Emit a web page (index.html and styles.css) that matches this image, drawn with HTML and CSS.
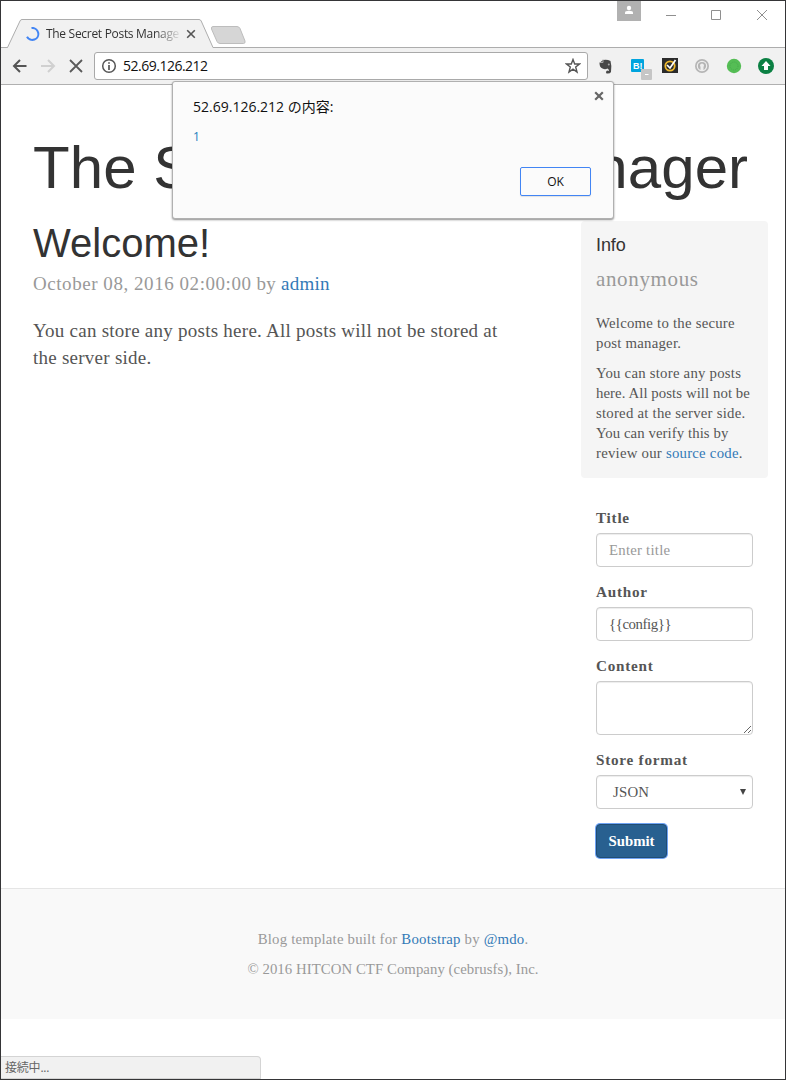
FILE: index.html
```
<!DOCTYPE html>
<html lang="en">
<head>
<meta charset="utf-8">
<title>The Secret Posts Manager</title>
<link rel="stylesheet" href="styles.css">
</head>
<body>
<div class="window">
  <header class="titlebar">
    <svg class="tab-shape" width="250" height="47" viewBox="0 0 250 47">
      <path d="M0 46.5H6.5L19 20Q19.6 18.500 21 18.500H198Q199.500 18.500 200.200 20L212 46.500H250V47H0Z" fill="#f1f1f1"/>
      <path d="M0 46.500H6.500L19 20Q19.600 18.500 21 18.500H198Q199.500 18.500 200.200 20L212 46.500H250" fill="none" stroke="#adadad"/>
      <path d="M212 25.500H236Q238 25.500 239 27.500L244 40Q244.500 42.500 242.500 42.500H219Q217 42.500 216 40.500L210.500 28Q210 25.500 212 25.500Z" fill="#d6d6d6" stroke="#bdbdbd"/>
    </svg>
    <div class="tab">
      <svg width="14" height="14" viewBox="0 0 14 14"><path d="M5.500 1A6 6 0 1 1 1 9.700" fill="none" stroke="#4285f4" stroke-width="2"/></svg>
      <span class="tab-title">The Secret Posts Manage</span>
      <svg width="10" height="10" viewBox="0 0 10 10"><path d="M1.200 1.200L8.800 8.800M8.800 1.200L1.200 8.800" stroke="#555" stroke-width="1.600"/></svg>
    </div>
    <div class="window-buttons">
      <span class="profile"><svg width="24" height="20" viewBox="0 0 24 20"><circle cx="12" cy="7" r="2.200" fill="#fff"/><path d="M8 13V11.500Q8 9.800 12 9.800T16 11.500V13Z" fill="#fff"/></svg></span>
      <svg width="112" height="28" viewBox="0 0 112 28"><path d="M0 14.500H10M45.500 9.500H54.500V18.500H45.500ZM91 9L101 19M101 9L91 19" fill="none" stroke="#8f8f8f"/></svg>
    </div>
  </header>
  <nav class="toolbar">
    <svg class="nav-icons" width="82" height="18" viewBox="0 0 82 18">
      <path d="M14.500 9H2M8 3L2 9L8 15" fill="none" stroke="#555" stroke-width="2"/>
      <path d="M29 9H42.500M36 3L42 9L36 15" fill="none" stroke="#d0d0d0" stroke-width="2"/>
      <path d="M58 3L70 15M70 3L58 15" stroke="#5a5a5a" stroke-width="1.800"/>
    </svg>
    <div class="address">
      <svg width="16" height="16" viewBox="0 0 16 16"><circle cx="8" cy="8" r="6.300" fill="none" stroke="#555" stroke-width="1.500"/><path d="M8 4.200V5.800M8 7V12" stroke="#555" stroke-width="1.700"/></svg>
      <span class="url">52.69.126.212</span>
      <svg width="16" height="16" viewBox="0 0 16 16"><path d="M8 1.500L9.700 6H14.500L10.700 9L12 14L8 11.100L4 14L5.300 9L1.500 6H6.300Z" fill="none" stroke="#555" stroke-width="1.400"/></svg>
    </div>
    <svg class="extensions" width="182" height="30" viewBox="0 0 182 30">
      <path d="M1.500 8L5 5Q9 4 12.500 6Q14 11 13 17Q12 19 8.500 18.500Q7 17 9 15.500L11 16Q11 14 9.500 13.500Q7 15 4.500 13.500Q1.500 12.500 1.500 8Z" fill="#484848"/><path d="M1.500 7.500H5V4.500" fill="none" stroke="#a9a9a9" stroke-width="1"/><circle cx="10.800" cy="9.500" r="1" fill="#aaa"/>
      <rect x="33" y="4" width="13" height="13" rx="1" fill="#00a4de"/><text x="35" y="14" class="hatena">B!</text><rect x="43" y="14" width="11" height="11" rx="1" fill="#c6c6c6"/><path d="M47 19.500H50.500" stroke="#fff"/>
      <rect x="64" y="3" width="16" height="15" fill="#2b2b2b"/><circle cx="72" cy="11" r="4.700" fill="none" stroke="#eeb82b" stroke-width="1.800"/><path d="M69 10L72 13L77.500 5" fill="none" stroke="#fff" stroke-width="1.700"/>
      <circle cx="104" cy="11" r="7" fill="#b5b5b5"/><circle cx="104" cy="11" r="4.700" fill="none" stroke="#eee" stroke-width="1.200"/><path d="M102.500 16V12Q101 9 104 8.500Q107 9 105.500 12V16Z" fill="#eee"/>
      <circle cx="136" cy="11" r="7.200" fill="#55bd55"/><circle cx="136" cy="11" r="4" fill="none" stroke="#45ac4b" stroke-dasharray="1 1"/>
      <circle cx="168" cy="11" r="8" fill="#0b8043"/><path d="M168 6L172.500 11H170V15H166V11H163.500Z" fill="#fff"/>
    </svg>
  </nav>

  <main class="page">
    <h1 class="blog-title">The Secret Posts Manager</h1>
    <div class="columns">
      <article class="post">
        <h2>Welcome!</h2>
        <p class="meta"><span class="date">October 08, 2016 02:00:00</span> by <a href="#">admin</a></p>
        <p class="body-text">You can store any posts here. All posts will not be stored at<br>the server side.</p>
      </article>
      <aside>
        <section class="info">
          <h4>Info</h4>
          <p class="user">anonymous</p>
          <p>Welcome to the secure<br>post manager.</p>
          <p>You can store any posts<br><span class="snug">here. All posts will not be</span><br>stored at the server side.<br><span class="snug">You can verify this by</span><br>review our <a href="#">source code</a>.</p>
        </section>
        <form class="post-form">
          <label for="title">Title</label>
          <input id="title" placeholder="Enter title">
          <label for="author">Author</label>
          <input id="author" class="author" value="{{config}}">
          <label for="content">Content</label>
          <div class="area"><textarea id="content"></textarea><svg class="grip" width="9" height="9" viewBox="0 0 9 9"><path d="M1 8L8 1M5 8L8 5" stroke="#555" stroke-width=".9"/></svg></div>
          <label>Store format</label>
          <div class="select"><span>JSON</span><svg width="6" height="6" viewBox="0 0 6 6"><path d="M0 0H6L3 6Z" fill="#444"/></svg></div>
          <button type="button">Submit</button>
        </form>
      </aside>
    </div>
  </main>
  <footer class="blog-footer">
    <p class="built">Blog template built for <a href="#">Bootstrap</a> by <a href="#">@mdo</a>.</p>
    <p class="copy">© 2016 HITCON CTF Company (cebrusfs), Inc.</p>
  </footer>

  <div class="dialog" role="dialog">
    <svg class="dialog-close" width="10" height="10" viewBox="0 0 10 10"><path d="M1.200 1.200L8.800 8.800M8.800 1.200L1.200 8.800" stroke="#666" stroke-width="2.200"/></svg>
    <p class="dialog-title">52.69.126.212 の内容:</p>
    <p class="dialog-text">1</p>
    <button class="ok" type="button">OK</button>
  </div>
  <div class="status">接続中...</div>
</div>
</body>
</html>
```
FILE: styles.css
```
* { box-sizing: border-box; }
body { margin: 0; }
.window {
  position: relative;
  width: 786px;
  height: 1080px;
  overflow: hidden;
  border: 1px solid #353537;
  background: #fff;
  color: #555;
  font-family: Georgia, "Liberation Serif", serif;
}
h1, h2, h4, p { margin: 0; }
h1, h2, h4 { font-family: "Liberation Sans", Arial, sans-serif; font-weight: 400; color: #333; }
a { color: #337ab7; text-decoration: none; }

.titlebar {
  position: relative;
  display: flex;
  justify-content: space-between;
  height: 47px;
  border-bottom: 1px solid #adadad;
}
.tab-shape { position: absolute; left: 0; top: 0; }
.tab { position: relative; display: flex; align-items: center; height: 29px; margin: 18px 0 0 25px; }
.tab-title {
  width: 134px;
  margin: 0 6px 0 6px;
  overflow: hidden;
  white-space: nowrap;
  font: 12px/18px "Open Sans", "Noto Sans", sans-serif;
  letter-spacing: -.3px;
  color: #333;
  -webkit-mask-image: linear-gradient(90deg, #000 108px, transparent 136px);
  mask-image: linear-gradient(90deg, #000 108px, transparent 136px);
}
.window-buttons { display: flex; gap: 25px; margin-right: 7px; }
.profile { width: 24px; height: 20px; background: #b1b1b1; }

.toolbar { display: flex; align-items: center; height: 37px; background: #f1f1f1; border-bottom: 1px solid #b0b0b0; padding-left: 11px; }
.address {
  display: flex;
  align-items: center;
  width: 494px;
  height: 28px;
  padding: 0 6px;
  border: 1px solid #a9a9a9;
  border-radius: 3px;
  background: #fff;
}
.url { flex: 1; margin-left: 6px; font: 14px/20px "Open Sans", "Noto Sans", sans-serif; letter-spacing: -.5px; color: #111; }
.extensions { margin: 8px 0 0 10px; }
.hatena { font: bold 9px "Liberation Sans", sans-serif; fill: #fff; }

.page { height: 803px; padding: 50px 17px 0 32px; }
.blog-title { font-size: 60px; line-height: 66px; letter-spacing: .06px; white-space: nowrap; }
.columns { display: flex; justify-content: space-between; margin-top: 20px; }
.post h2 { font-size: 40px; line-height: 44px; margin-bottom: 5px; }
.meta { font-size: 19px; line-height: 27px; margin-bottom: 20px; color: #999; letter-spacing: .25px; }
.date { letter-spacing: .55px; }
.body-text { font-size: 19px; line-height: 27px; letter-spacing: .25px; }

aside { width: 187px; font-size: 14.800px; line-height: 20px; letter-spacing: .23px; }
.info { height: 257px; padding: 14px 15px 15px; border-radius: 4px; background: #f5f5f5; white-space: nowrap; }
.info h4 { font-size: 18px; line-height: 20px; margin-bottom: 11px; letter-spacing: -.1px; }
.info p { margin-bottom: 10px; }
.info .user { font-size: 21px; line-height: 27px; margin-bottom: 20px; color: #999; letter-spacing: .65px; }
.snug { letter-spacing: .07px; }

.post-form { padding: 30px 15px 0; }
label { display: block; height: 20px; margin-bottom: 5px; font-size: 15.200px; font-weight: 700; letter-spacing: .75px; }
input, textarea, .select {
  display: block;
  width: 157px;
  height: 34px;
  margin: 0 0 15px;
  padding: 6px 12px;
  border: 1px solid #ccc;
  border-radius: 4px;
  background: #fff;
  box-shadow: inset 0 1px 1px rgba(0, 0, 0, .075);
  color: #555;
  font: inherit;
  letter-spacing: inherit;
}
.author { letter-spacing: -.4px; }
input::placeholder { color: #999; opacity: 1; }
.area { position: relative; }
textarea { height: 54px; resize: none; overflow: hidden; }
.grip { position: absolute; right: 1px; bottom: 1px; }
.select { display: flex; align-items: center; justify-content: space-between; padding: 0 6px 0 16px; }
.post-form button {
  display: block;
  width: 71px;
  height: 34px;
  padding: 0;
  border: 1px solid #204d74;
  border-radius: 4px;
  background: #286090;
  color: #fff;
  font: bold 14.800px/20px Georgia, "Liberation Serif", serif;
  box-shadow: 0 0 0 1px #6ea3f5;
}

.blog-footer { height: 131px; padding: 40px 0; border-top: 1px solid #e5e5e5; background: #f9f9f9; color: #999; text-align: center; font-size: 14.800px; line-height: 20px; letter-spacing: .2px; }
.blog-footer p + p { margin-top: 10px; }
.copy { letter-spacing: .05px; }

.dialog {
  position: absolute;
  left: 171px;
  top: 80px;
  width: 442px;
  height: 138px;
  padding: 15px 22px 22px 20px;
  display: flex;
  flex-direction: column;
  border: 1px solid #b0b0b0;
  border-radius: 3px;
  background: #fbfbfb;
  box-shadow: 0 1px 2px rgba(0, 0, 0, .45);
  color: #111;
  font-family: "Open Sans", "Noto Sans", "Noto Sans CJK JP", sans-serif;
}
.dialog-close { position: absolute; right: 9px; top: 9px; }
.dialog-title { font-size: 14px; line-height: 20px; letter-spacing: 0; }
.dialog-text { margin-top: 11px; font-size: 12px; line-height: 18px; color: #1a7fbe; }
.ok { align-self: flex-end; width: 71px; height: 29px; margin-top: auto; padding: 0; border: 1px solid #4285f4; border-radius: 2px; background: #fbfbfb; color: #111; font: 12px "Open Sans", sans-serif; letter-spacing: -.2px; box-shadow: 0 1px 1px rgba(0, 0, 0, .1); }
.status {
  position: absolute;
  left: 0;
  bottom: 0;
  width: 260px;
  height: 23px;
  padding-left: 4px;
  border: 1px solid #d4d4d4;
  border-left: 0;
  border-radius: 0 4px 0 0;
  background: #f1f1f1;
  color: #666;
  font: 12px/21px "Open Sans", "Noto Sans CJK JP", sans-serif;
  letter-spacing: -.2px;
}
```
